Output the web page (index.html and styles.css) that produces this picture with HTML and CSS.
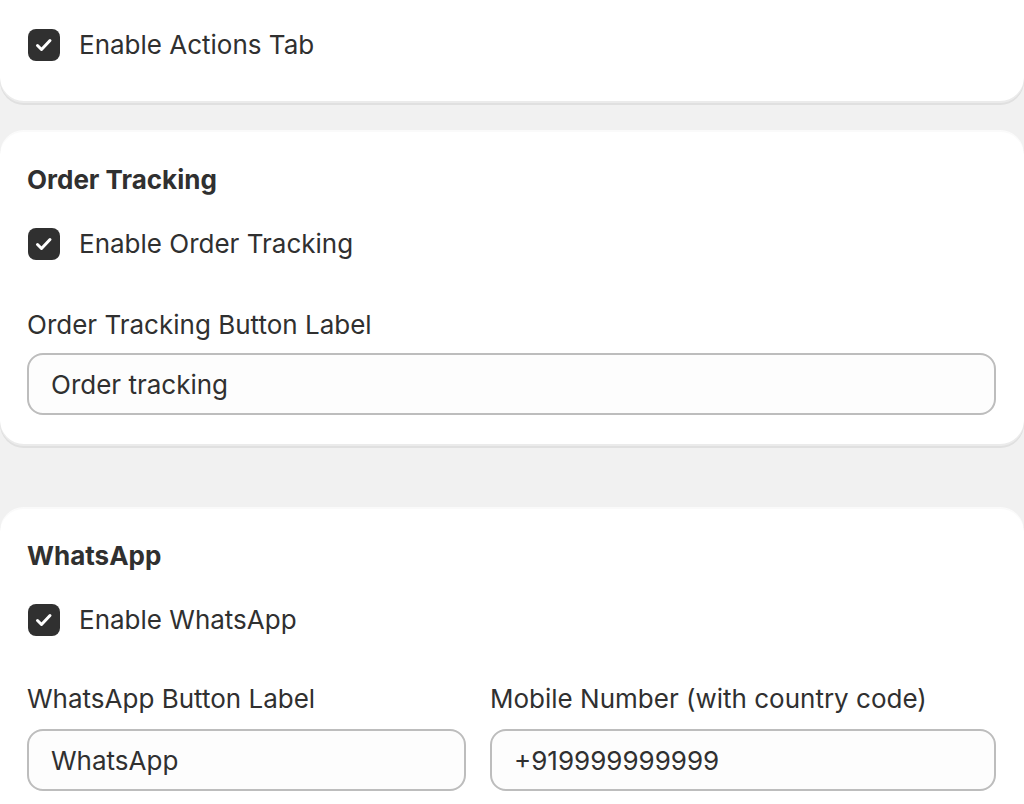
FILE: index.html
```html
<!DOCTYPE html>
<html lang="en">
<head>
    <meta charset="UTF-8">
    <meta name="viewport" content="width=device-width, initial-scale=1.0">
    <title>Settings</title>
    <link rel="stylesheet" href="styles.css">
</head>
<body>
    <div class="settings">
        <section class="card card-actions">
            <label class="check-row">
                <span class="checkbox">
                    <svg viewBox="0 0 32 32" width="32" height="32"><path d="M9.5 16.5 L13.5 20.5 L22 11.5" /></svg>
                </span>
                <span>Enable Actions Tab</span>
            </label>
        </section>

        <section class="card card-tracking">
            <h2>Order Tracking</h2>
            <label class="check-row">
                <span class="checkbox">
                    <svg viewBox="0 0 32 32" width="32" height="32"><path d="M9.5 16.5 L13.5 20.5 L22 11.5" /></svg>
                </span>
                <span>Enable Order Tracking</span>
            </label>
            <div class="field">
                <label for="tracking-label">Order Tracking Button Label</label>
                <input type="text" id="tracking-label" value="Order tracking">
            </div>
        </section>

        <section class="card card-whatsapp">
            <h2>WhatsApp</h2>
            <label class="check-row">
                <span class="checkbox">
                    <svg viewBox="0 0 32 32" width="32" height="32"><path d="M9.5 16.5 L13.5 20.5 L22 11.5" /></svg>
                </span>
                <span>Enable WhatsApp</span>
            </label>
            <div class="field-group">
                <div class="field">
                    <label for="wa-label">WhatsApp Button Label</label>
                    <input type="text" id="wa-label" value="WhatsApp">
                </div>
                <div class="field">
                    <label for="wa-number">Mobile Number (with country code)</label>
                    <input type="text" id="wa-number" value="+919999999999">
                </div>
            </div>
        </section>
    </div>
</body>
</html>
```

FILE: styles.css
```css
:root {
    --bg: #f1f1f1;
    --card: #ffffff;
    --text: #303030;
    --input-border: #bdbdbd;
    --input-bg: #fdfdfd;
}

* {
    margin: 0;
    padding: 0;
    box-sizing: border-box;
}

body {
    font-family: Inter, "Noto Sans", sans-serif;
    font-size: 26px;
    line-height: 40px;
    color: var(--text);
    background-color: var(--bg);
    overflow: hidden;
}

.settings {
    margin-top: -40px;
}

.card {
    background: var(--card);
    border-radius: 24px;
    padding: 30px 28px 31px 27px;
    box-shadow: 0 2px 0 rgba(26, 26, 26, 0.08), inset 0 -2px 0 rgba(0, 0, 0, 0.08), inset 0 2px 0 rgba(0, 0, 0, 0.02);
}

.card-actions {
    padding-top: 65px;
    padding-bottom: 38px;
}

.card-tracking {
    margin-top: 27px;
}

.card-whatsapp {
    margin-top: 61px;
    padding-top: 29px;
    padding-bottom: 40px;
}

.card h2 {
    font-size: 26px;
    font-weight: 650;
    line-height: 40px;
    margin-bottom: 24px;
}

.check-row {
    display: flex;
    align-items: center;
    gap: 19px;
    padding-left: 1px;
}

.checkbox {
    width: 32px;
    height: 32px;
    border-radius: 8px;
    background: var(--text);
    display: flex;
}

.checkbox path {
    fill: none;
    stroke: #fff;
    stroke-width: 3;
    stroke-linecap: round;
    stroke-linejoin: round;
}

.field {
    display: flex;
    flex-direction: column;
    gap: 8px;
}

.card-tracking .field {
    margin-top: 41px;
}

.field-group {
    margin-top: 39px;
    display: grid;
    grid-template-columns: 439px 1fr;
    gap: 24px;
}

.field-group .field {
    gap: 10px;
}

.field input {
    font: inherit;
    color: var(--text);
    height: 62px;
    padding: 0 22px;
    border: 2px solid var(--input-border);
    border-radius: 16px;
    background: var(--input-bg);
    width: 100%;
}
```
